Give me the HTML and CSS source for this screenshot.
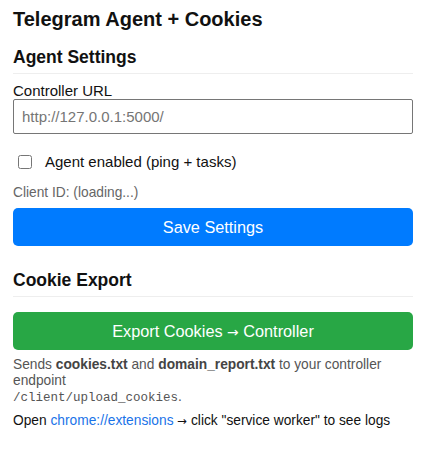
FILE: index.html
```html
<!DOCTYPE html>
<html>
<head>
<meta charset="utf-8">
<link rel="stylesheet" href="styles.css">
</head>
<body>
<div class="popup">
  <h1 class="title">Telegram Agent + Cookies</h1>

  <section class="section">
    <h2 class="section-title">Agent Settings</h2>
    <label class="field-label" for="url">Controller URL</label>
    <input class="text-input" id="url" type="text" placeholder="http://127.0.0.1:5000/">
    <label class="check-row">
      <input class="check" type="checkbox">
      <span>Agent enabled (ping + tasks)</span>
    </label>
    <div class="client-id">Client ID: (loading...)</div>
    <button class="btn btn-primary">Save Settings</button>
  </section>

  <section class="section section-cookies">
    <h2 class="section-title">Cookie Export</h2>
    <button class="btn btn-success btn-export">Export Cookies <span class="arrow">→</span> Controller</button>
    <p class="hint">Sends <b>cookies.txt</b> and <b>domain_report.txt</b> to your controller endpoint<br><code>/client/upload_cookies</code>.</p>
    <p class="note">Open <a href="#" class="link">chrome://extensions</a> <span class="arrow">→</span> click "service worker" to see logs</p>
  </section>
</div>
</body>
</html>
```
FILE: styles.css
```css
html, body {
  margin: 0;
  padding: 0;
  background: #fff;
}
body {
  font-family: "Liberation Sans", Arial, sans-serif;
  color: #111;
}
.popup {
  width: 400px;
  padding: 8px 13px 12px 13px;
}
.title {
  font-size: 20px;
  font-weight: bold;
  margin: 0 0 16px 0;
  line-height: 23px;
  color: #111;
}
.section-cookies {
  margin-top: 24px;
}
.section-title {
  font-size: 17.5px;
  margin: 0;
  padding-bottom: 6px;
  border-bottom: 1px solid #eee;
  line-height: 20px;
  color: #111;
}
.field-label {
  display: block;
  font-size: 15px;
  line-height: 16px;
  margin-top: 9px;
}
.text-input {
  display: block;
  box-sizing: border-box;
  width: 100%;
  height: 35px;
  padding: 6px 8px;
  font-family: "Liberation Sans", Arial, sans-serif;
  font-size: 15px;
  border: 1px solid #767676;
  border-radius: 2px;
  margin: 0;
}
.text-input::placeholder {
  color: #757575;
}
.check-row {
  display: flex;
  align-items: center;
  gap: 13px;
  font-size: 15px;
  line-height: 17px;
  margin: 19px 0 0 5px;
}
.check {
  margin: 0;
  width: 14px;
  height: 14px;
}
.client-id {
  font-size: 13.75px;
  line-height: 16px;
  color: #666;
  margin-top: 15px;
}
.btn {
  display: block;
  width: 100%;
  height: 38px;
  border: none;
  border-radius: 5px;
  color: #fff;
  font-family: "Liberation Sans", Arial, sans-serif;
  font-size: 16.3px;
  padding: 0;
}
.btn-primary {
  background: #007bff;
  margin-top: 7px;
}
.btn-success {
  background: #28a745;
}
.btn-export {
  margin-top: 15px;
}
.arrow {
  font-family: "DejaVu Sans", sans-serif;
  font-size: 0.85em;
}
.hint {
  font-size: 13.75px;
  color: #555;
  margin: 7px 0 0 0;
  line-height: 16px;
}
.hint b {
  color: #444;
}
.hint code {
  font-family: "Liberation Mono", "Courier New", monospace;
  font-size: 12.5px;
  color: #555;
}
.note {
  font-size: 13.75px;
  line-height: 16px;
  margin: 7px 0 0 0;
  color: #111;
}
.link {
  color: #1a73e8;
  text-decoration: none;
}
```
